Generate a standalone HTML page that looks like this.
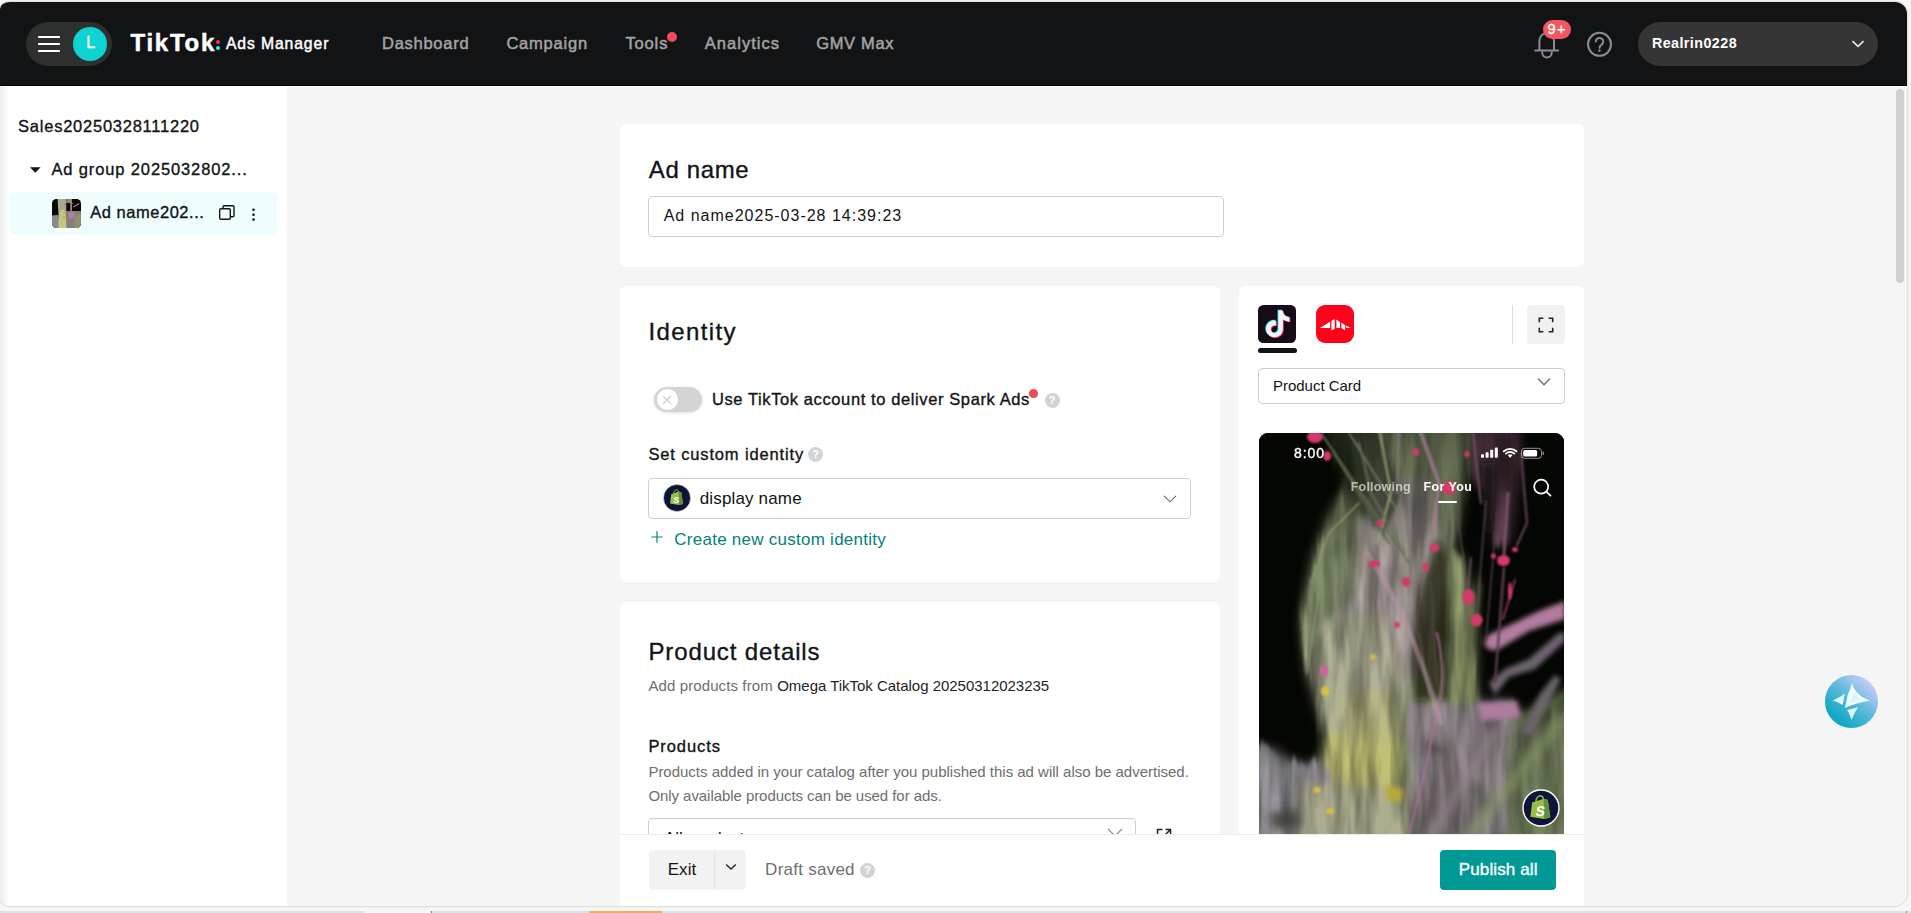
<!DOCTYPE html>
<html lang="en">
<head>
<meta charset="utf-8">
<title>TikTok Ads Manager</title>
<style>
html,body{margin:0;padding:0;}
body{width:1911px;height:913px;overflow:hidden;background:#f6f6f6;font-family:"Liberation Sans",sans-serif;color:#121415;position:relative;}
.abs{position:absolute;}
.t{position:absolute;white-space:nowrap;line-height:1;}
.m{-webkit-text-stroke:0.35px currentColor;}
#win{position:absolute;left:0;top:2px;width:1907px;height:903.500px;border-radius:10px 12px 14px 10px / 7px 12px 14px 8px;overflow:hidden;background:#f5f5f5;box-shadow:0 0 0 1.200px #e0e0e0;}
#hdr{position:absolute;left:0;top:0;width:1907px;height:84px;box-sizing:border-box;border-bottom:1px solid #000;background:#121315;z-index:3;}
#side{position:absolute;left:0;top:83px;width:287px;height:821px;background:#fff;}
.card{position:absolute;background:#fff;border-radius:6px;}
.inp{position:absolute;box-sizing:border-box;border:1px solid #cfcfcf;border-radius:4px;background:#fff;}
.help{position:absolute;width:15px;height:15px;border-radius:50%;background:#d2d3d4;color:#fff;font-size:11px;font-weight:bold;text-align:center;line-height:15px;}
</style>
</head>
<body>
<div id="win">
  <!-- HEADER -->
  <div id="hdr">
    <div class="abs" style="left:26px;top:20px;width:86px;height:44px;border-radius:22px;background:#2e2f2f;"></div>
    <svg class="abs" style="left:38px;top:33px" width="22" height="18" viewBox="0 0 22 18"><path d="M1 2h20M1 9h20M1 16h20" stroke="#fff" stroke-width="2.2" stroke-linecap="round"/></svg>
    <div class="abs" style="left:73.400px;top:25px;width:33.600px;height:33.600px;border-radius:50%;background:#0fd3d0;"></div>
    <span class="t m" id="tL" style="font-size:16px;color:#fff;letter-spacing:0.000px;left:86.2px;top:33.2px;">L</span>
    <span class="t" id="tTikTok" style="font-size:24px;-webkit-text-stroke:0.5px #fff;font-weight:bold;color:#fff;letter-spacing:1.772px;left:130.4px;top:28.7px;">TikTok</span>
    <div class="abs" style="left:216px;top:37.5px;width:4.4px;height:4.4px;border-radius:50%;background:#fe2c55;"></div>
    <div class="abs" style="left:216px;top:43.5px;width:4.4px;height:4.4px;border-radius:50%;background:#25f4ee;"></div>
    <span class="t m" id="tAds" style="font-size:15.7px;-webkit-text-stroke:0.45px #fff;color:#fff;letter-spacing:0.919px;left:225.9px;top:33.6px;">Ads Manager</span>
    <span class="t m" id="tDash" style="font-size:16.5px;-webkit-text-stroke:0.5px #a2a3a4;color:#a2a3a4;letter-spacing:0.733px;left:382.0px;top:32.8px;">Dashboard</span>
    <span class="t m" id="tCamp" style="font-size:16.5px;-webkit-text-stroke:0.5px #a2a3a4;color:#a2a3a4;letter-spacing:0.797px;left:506.4px;top:32.8px;">Campaign</span>
    <span class="t m" id="tTools" style="font-size:16.5px;-webkit-text-stroke:0.5px #a2a3a4;color:#a2a3a4;letter-spacing:0.867px;left:625.4px;top:32.8px;">Tools</span>
    <div class="abs" style="left:666.800px;top:29.800px;width:10px;height:10px;border-radius:50%;background:#f04c55;"></div>
    <span class="t m" id="tAnal" style="font-size:16.5px;-webkit-text-stroke:0.5px #a2a3a4;color:#a2a3a4;letter-spacing:1.034px;left:704.8px;top:32.8px;">Analytics</span>
    <span class="t m" id="tGmv" style="font-size:16.5px;-webkit-text-stroke:0.5px #a2a3a4;color:#a2a3a4;letter-spacing:0.676px;left:816.2px;top:32.8px;">GMV Max</span>
    <!-- bell -->
    <svg class="abs" style="left:1532px;top:28px" width="30" height="30" viewBox="0 0 30 30" fill="none" stroke="#8b8c8d" stroke-width="2"><path d="M2.5 20.6h24.5"/><path d="M7.4 20.6V10.5a7.3 7.3 0 0 1 14.6 0v10.1"/><path d="M10.300 21.400v1.300a4.700 4.700 0 0 0 9.400 0v-1.300"/></svg>
    <div class="abs" style="left:1543px;top:18px;width:28px;height:19px;border-radius:10px;background:#f4575f;"></div>
    <span class="t m" id="t9" style="font-size:14.500px;color:#fff;letter-spacing:1.453px;left:1547.6px;top:19.9px;">9+</span>
    <!-- help -->
    <svg class="abs" style="left:1586px;top:29px" width="27" height="27" viewBox="0 0 27 27" fill="none" stroke="#8b8c8d" stroke-width="2"><circle cx="13.5" cy="13.3" r="11.5"/><path d="M9.8 10.6a3.7 3.7 0 1 1 5.6 3.2c-1.2.8-1.9 1.4-1.9 2.9" stroke-linecap="round"/><circle cx="13.5" cy="19.6" r="0.9" fill="#8b8c8d" stroke-width="1"/></svg>
    <!-- account -->
    <div class="abs" style="left:1638px;top:20px;width:240px;height:44px;border-radius:22px;background:#353535;"></div>
    <span class="t" id="tAcct" style="font-size:14.300px;font-weight:bold;color:#fff;letter-spacing:0.442px;left:1651.9px;top:33.6px;">Realrin0228</span>
    <svg class="abs" style="left:1850px;top:37px" width="16" height="10" viewBox="0 0 16 10" fill="none" stroke="#e6e6e6" stroke-width="1.6"><path d="M2.5 2.2l5.5 5.2 5.5-5.2"/></svg>
  </div>

  <div class="abs" style="left:0;top:84px;width:1907px;height:1px;background:#fff;"></div>
  <!-- SIDEBAR -->
  <div id="side">
    <div class="abs" style="left:0;top:0;width:9px;height:821px;background:linear-gradient(90deg,#ececec,#fff);"></div>
    <span class="t m" id="tSales" style="font-size:16.5px;letter-spacing:0.756px;left:18.1px;top:32.7px;">Sales20250328111220</span>
    <svg class="abs" style="left:29px;top:81px" width="13" height="8" viewBox="0 0 13 8"><path d="M1 1.2h10.6L6.3 6.8z" fill="#121415"/></svg>
    <span class="t m" id="tGrp" style="font-size:16.5px;letter-spacing:0.872px;left:51.4px;top:75.6px;">Ad group 2025032802...</span>
    <div class="abs" style="left:9px;top:107px;width:269px;height:43px;border-radius:5px;background:#f0fdff;"></div>
    <span class="t m" id="tAdn" style="font-size:16.5px;letter-spacing:0.531px;left:90.2px;top:118.8px;">Ad name202...</span>
    <svg class="abs" style="left:218px;top:119px" width="18" height="17" viewBox="0 0 18 17" fill="none" stroke="#121415" stroke-width="1.4"><rect x="1.700" y="4.700" width="10.600" height="10.600" rx="1.200" fill="#f6feff"/><path d="M5 4.400V2.900a1.200 1.200 0 0 1 1.200-1.200h8.600a1.200 1.200 0 0 1 1.200 1.200v8.600a1.200 1.200 0 0 1-1.200 1.200h-2.200"/></svg>
    <svg class="abs" style="left:251px;top:122px" width="5" height="16" viewBox="0 0 5 16" fill="#121415"><circle cx="2.5" cy="2.8" r="1.3"/><circle cx="2.5" cy="7.7" r="1.3"/><circle cx="2.5" cy="12.6" r="1.3"/></svg>
    <!-- thumbnail placeholder -->
    <div id="thumb" class="abs" style="left:52px;top:114px;width:29px;height:29px;border-radius:4.500px;background:#070905;overflow:hidden;"><svg width="29" height="29" viewBox="0 0 29 29"><defs><filter id="tb"><feGaussianBlur stdDeviation=".7"/></filter></defs><g filter="url(#tb)"><path d="M5.500 -1H14.500V30H5L6.500 16z" fill="#a9a890"/><path d="M14.500 -1H19V4H14.500z" fill="#8a8a78"/><path d="M18.200 0H20V12H18.200z" fill="#8e9460"/><path d="M14 12H30V30H14z" fill="#857c7c"/><path d="M-1 16.500L6.500 16V30H-1z" fill="#8c888c"/><path d="M8.500 11L12 10.500L14 18L14.500 30H6.500L7 19z" fill="#c6c684"/><path d="M21 7.500L27 4L27.500 5L21.500 8.500z" fill="#b87ca4"/><path d="M16 14L22 12.500L23 18L17 20z" fill="#a884a0"/><path d="M22 17L29 15V30H23z" fill="#8c9070"/><path d="M14.500 4H18V12H14.500z" fill="#0a0c08"/><circle cx="12" cy="18.500" r="1.300" fill="#e0a040"/><circle cx="15.500" cy="1" r=".8" fill="#d23a6a"/><circle cx="20.500" cy="4.500" r=".7" fill="#d23a6a"/><circle cx="13.200" cy="5.500" r=".7" fill="#d23a6a"/></g></svg></div>
  </div>

  <!-- MAIN placeholder -->
  <div id="main">
    <!-- Ad name card (coords relative to #win: y = page y - 2) -->
    <div class="card" style="left:620px;top:122px;width:964px;height:143px;"></div>
    <span class="t m" id="tAdName" style="font-size:24px;letter-spacing:0.623px;left:648.8px;top:156.0px;">Ad name</span>
    <div class="inp" style="left:648px;top:194px;width:576px;height:41px;"></div>
    <span class="t" id="tAdVal" style="font-size:16px;letter-spacing:0.996px;left:663.7px;top:206.4px;">Ad name2025-03-28 14:39:23</span>

    <!-- Identity card -->
    <div class="card" style="left:620px;top:284px;width:600px;height:296px;"></div>
    <span class="t m" id="tIdent" style="font-size:24px;letter-spacing:1.358px;left:648.6px;top:318.0px;">Identity</span>
    <div class="abs" style="left:654px;top:384.800px;width:48px;height:25.700px;border-radius:13px;background:#d3d4d5;box-shadow:0 1px 3px rgba(0,0,0,.12);"></div>
    <div class="abs" style="left:656.500px;top:387.200px;width:21px;height:21px;border-radius:50%;background:#fff;"></div>
    <svg class="abs" style="left:661px;top:392px" width="12" height="12" viewBox="0 0 12 12" stroke="#cfd0d1" stroke-width="1.3" fill="none"><path d="M2 2l8 8M10 2l-8 8"/></svg>
    <span class="t m" id="tSpark" style="font-size:16.5px;letter-spacing:0.606px;left:711.9px;top:388.8px;">Use TikTok account to deliver Spark Ads</span>
    <div class="abs" style="left:1029px;top:387px;width:8.5px;height:8.5px;border-radius:50%;background:#f04c55;"></div>
    <div class="help" style="left:1044.5px;top:391px;">?</div>
    <span class="t m" id="tSetCI" style="font-size:16.5px;letter-spacing:0.855px;left:648.4px;top:443.8px;">Set custom identity</span>
    <div class="help" style="left:808px;top:444.5px;">?</div>
    <div class="inp" style="left:648px;top:476px;width:543px;height:41px;"></div>
    <svg class="abs" style="left:663px;top:482px" width="28" height="28" viewBox="0 0 28 28"><circle cx="14" cy="14" r="13.5" fill="#0f1335" stroke="#e6e6e6" stroke-width=".6"/><path d="M8.2 10.2l7.6-2.6 2.6.9 1.6 11.4-4.2 1.1-8.7-1.5z" fill="#95bf47"/><path d="M15.8 7.6l2.6.9 1.6 11.4-4.2 1.1z" fill="#5e8e3e"/><path d="M10.6 9.6c.2-2.4 1.6-4 3-3.9 1 .1 1.7 1 2 2.3" fill="none" stroke="#95bf47" stroke-width="1"/><text x="10.3" y="18.6" font-family="Liberation Sans,sans-serif" font-size="9" font-weight="bold" font-style="italic" fill="#fff">S</text></svg>
    <span class="t" id="tDisp" style="font-size:17px;letter-spacing:0.157px;left:699.7px;top:487.6px;">display name</span>
    <svg class="abs" style="left:1162px;top:492px" width="16" height="10" viewBox="0 0 16 10" fill="none" stroke="#686a6c" stroke-width="1.150"><path d="M2 1.8l6 6 6-6"/></svg>
    <svg class="abs" style="left:649.800px;top:528.300px" width="14" height="14" viewBox="0 0 14 14" stroke="#0a8480" stroke-width="1.200" fill="none"><path d="M7 1.300v11.400M1.300 7h11.400"/></svg>
    <span class="t" id="tCreate" style="font-size:17px;color:#077f7b;letter-spacing:0.258px;left:674.3px;top:529.3px;">Create new custom identity</span>

    <!-- Product details card -->
    <div class="card" style="left:620px;top:600px;width:600px;height:320px;"></div>
    <span class="t m" id="tProd" style="font-size:24px;letter-spacing:0.888px;left:648.4px;top:637.5px;">Product details</span>
    <span class="t" id="tAddFrom" style="font-size:15px;color:#6d6e70;letter-spacing:0.109px;left:648.4px;top:676.4px;">Add products from</span>
    <span class="t" id="tOmega" style="font-size:15px;color:#232425;letter-spacing:-0.021px;left:777.2px;top:676.4px;">Omega TikTok Catalog 20250312023235</span>
    <span class="t m" id="tProducts" style="font-size:16.5px;letter-spacing:0.911px;left:648.4px;top:736.3px;">Products</span>
    <span class="t" id="tPAdded" style="font-size:15px;color:#6d6e70;letter-spacing:-0.009px;left:648.4px;top:762.1px;">Products added in your catalog after you published this ad will also be advertised.</span>
    <span class="t" id="tOnly" style="font-size:15px;color:#6d6e70;letter-spacing:-0.059px;left:648.4px;top:785.9px;">Only available products can be used for ads.</span>
    <div class="inp" style="left:648px;top:816px;width:488px;height:41px;"></div>
    <span class="t" id="tAllp" style="left:664px;top:828px;font-size:17px;">All products</span>
    <svg class="abs" style="left:1106px;top:826px" width="18" height="12" viewBox="0 0 18 12" fill="none" stroke="#8a8c8e" stroke-width="1.200"><path d="M2 1l7 7 7-7"/></svg>
    <svg class="abs" style="left:1155px;top:825px" width="18" height="18" viewBox="0 0 18 18" fill="none" stroke="#232425" stroke-width="1.5"><path d="M7.5 2.5h-5v13h13v-5M10.5 2.5h5v5M15.5 2.5l-7 7"/></svg>

    <!-- Preview card -->
    <div class="card" style="left:1239px;top:284px;width:345px;height:640px;"></div>
    <div id="tticon" class="abs" style="left:1258px;top:303px;width:38.200px;height:38.200px;border-radius:5.500px;background:#170b1a;overflow:hidden;"><svg width="38.500" height="38.500" viewBox="0 0 38.500 38.500"><defs><path id="ttn" d="M12.525.02c1.31-.02 2.61-.01 3.91-.02.08 1.53.63 3.09 1.75 4.17 1.12 1.11 2.7 1.62 4.24 1.79v4.03c-1.44-.05-2.89-.35-4.2-.97-.57-.26-1.1-.59-1.62-.93-.01 2.92.01 5.84-.02 8.75-.08 1.4-.54 2.79-1.35 3.94-1.31 1.92-3.58 3.17-5.91 3.21-1.43.08-2.86-.31-4.08-1.03-2.02-1.19-3.44-3.37-3.65-5.71-.02-.5-.03-1-.01-1.49.18-1.9 1.12-3.72 2.58-4.96 1.66-1.44 3.98-2.13 6.15-1.72.02 1.48-.04 2.96-.04 4.44-.99-.32-2.15-.23-3.02.37-.63.41-1.11 1.04-1.36 1.75-.21.51-.15 1.07-.14 1.61.24 1.64 1.82 3.02 3.5 2.87 1.12-.01 2.19-.66 2.77-1.61.19-.33.4-.67.41-1.06.1-1.79.06-3.57.07-5.36.01-4.03-.01-8.05.02-12.07z"/></defs><g transform="translate(6.400 5.500) scale(1.120)"><use href="#ttn" fill="#25f4ee" transform="translate(-.75 -.6)"/><use href="#ttn" fill="#fe2c55" transform="translate(.75 .6)"/><use href="#ttn" fill="#f4f4f4"/></g></svg></div>
    <div class="abs" style="left:1258px;top:346px;width:39px;height:5px;border-radius:2.5px;background:#121415;"></div>
    <div id="pgicon" class="abs" style="left:1316px;top:303px;width:38px;height:38.200px;border-radius:9px;background:#fe0219;overflow:hidden;"><svg width="38.500" height="38.500" viewBox="0 0 38.500 38.500" fill="#fff"><path d="M3.900 23.100L14.100 16.800V23.100z"/><path d="M15.400 16L18.700 13.900V24L15.400 25.200z"/><path d="M20.400 14.400L24 16.900V23.100H20.400z"/><path d="M25.300 17.800L29.200 20.200V25.200L25.300 23.100z"/><path d="M30.200 20.600L34.800 23.100H30.200z"/></svg></div>
    <div class="abs" style="left:1511.5px;top:303px;width:1.5px;height:39px;background:#dcdcdc;"></div>
    <div class="abs" style="left:1527px;top:303px;width:38px;height:39px;border-radius:4px;background:#f1f1f1;"></div>
    <svg class="abs" style="left:1538px;top:315px" width="16" height="16" viewBox="0 0 16 16" fill="none" stroke="#232425" stroke-width="1.6"><path d="M1.3 5.3v-4h4M10.7 1.3h4v4M14.7 10.7v4h-4M5.3 14.7h-4v-4"/></svg>
    <div class="inp" style="left:1258px;top:366px;width:307px;height:36px;"></div>
    <span class="t" id="tPCard" style="font-size:15px;letter-spacing:-0.025px;left:1273.0px;top:376.4px;">Product Card</span>
    <svg class="abs" style="left:1536px;top:375px" width="16" height="10" viewBox="0 0 16 10" fill="none" stroke="#6a6c6e" stroke-width="1.3"><path d="M2 1.8l6 6 6-6"/></svg>
    <div id="phone" class="abs" style="left:1258.800px;top:431px;width:305.500px;height:420px;border-radius:9px 9px 0 0;background:#050604;overflow:hidden;">
<svg class="abs" style="left:0;top:0" width="306" height="420" viewBox="0 0 306 420">
  <defs>
    <filter id="b7" x="-30%" y="-30%" width="160%" height="160%"><feGaussianBlur stdDeviation="6"/></filter>
    <filter id="b4" x="-30%" y="-30%" width="160%" height="160%"><feGaussianBlur stdDeviation="4"/></filter>
    <filter id="b3" x="-30%" y="-30%" width="160%" height="160%"><feGaussianBlur stdDeviation="2.800"/></filter>
    <filter id="b2" x="-30%" y="-30%" width="160%" height="160%"><feGaussianBlur stdDeviation="2"/></filter>
    <filter id="b1" x="-30%" y="-30%" width="160%" height="160%"><feGaussianBlur stdDeviation="0.8"/></filter>
    <filter id="wisp" x="-30" y="-30" width="366" height="480" filterUnits="userSpaceOnUse" primitiveUnits="userSpaceOnUse">
      <feTurbulence type="fractalNoise" baseFrequency="0.06 0.009" numOctaves="3" seed="7" result="n"/>
      <feColorMatrix in="n" type="matrix" values="0 0 0 0 0  0 0 0 0 0  0 0 0 0 0  2.6 0 0 0 -0.75" result="na"/>
      <feGaussianBlur in="SourceGraphic" stdDeviation="3" result="bl"/>
      <feDisplacementMap in="bl" in2="n" scale="26" xChannelSelector="G" yChannelSelector="B" result="dp"/>
      <feComposite in="dp" in2="na" operator="in"/>
    </filter>
    <linearGradient id="topdark" x1="0" y1="0" x2="0" y2="1"><stop offset="0" stop-color="#060805" stop-opacity=".42"/><stop offset=".6" stop-color="#060805" stop-opacity=".25"/><stop offset="1" stop-color="#060805" stop-opacity="0"/></linearGradient>
    <g id="smoke">
      <!-- main column -->
      <path d="M75 -30 L215 -30 L205 60 L195 110 L186 170 L182 240 L178 300 L200 430 L40 430 L62 340 L66 300 L48 240 L42 190 L52 130 L70 80 L95 40 Z" fill="#a2b084"/>
      <path d="M110 60 L170 40 L185 120 L180 200 L150 260 L100 250 L70 200 L90 120 Z" fill="#c6b0be" opacity=".7"/>
      <path d="M60 190 L120 180 L150 250 L140 300 L70 300 L48 240 Z" fill="#bcbc9e" opacity=".9"/>
      <path d="M55 120 L100 100 L95 170 L60 190 L46 170 Z" fill="#86946e" opacity=".8"/>
      <path d="M55 -30 L110 -30 L150 70 L120 100 L95 75 Z" fill="#3c4630" opacity=".7"/>
      <!-- right top pink wisps -->
      <path d="M205 -30 L262 -30 L258 60 L250 110 L236 112 L228 60 L214 40 Z" fill="#7a5068"/>
      <!-- green second column -->
      <path d="M190 115 L204 125 L216 170 L219 300 L196 310 L186 260 L190 200 Z" fill="#9aa872"/>
      <!-- bottom smoke -->
      <path d="M150 272 L250 266 L270 290 L340 270 L340 450 L150 450 Z" fill="#9a9096"/>
      <path d="M-30 318 L12 314 L30 326 L48 332 L72 318 L80 345 L70 450 L-30 450 Z" fill="#a09ca4"/>
      <path d="M250 300 L340 250 L340 450 L240 450 Z" fill="#788a5c" opacity=".8"/>
      <path d="M72 300 L120 290 L142 310 L146 362 L120 372 L80 360 L64 332 Z" fill="#cccc7c"/>
      <path d="M84 262 L132 255 L146 300 L120 310 L80 306 Z" fill="#c4c48a" opacity=".8"/>
      <path d="M40 352 L150 352 L160 430 L40 430 Z" fill="#b8b898" opacity=".9"/>
    </g>
  </defs>
  <rect width="306" height="420" fill="#040603"/>
  <use href="#smoke" filter="url(#b7)" opacity=".58"/>
  <use href="#smoke" filter="url(#wisp)" opacity=".88"/>
  <rect x="0" y="0" width="306" height="130" fill="url(#topdark)"/>
  <!-- dark gap between columns -->
  <g filter="url(#b4)">
    <path d="M178 104 L190 122 L189 200 L186 266 L156 268 L155 215 L162 150 Z" fill="#0c1008" opacity=".72"/>
    <path d="M222 30 L236 30 L234 100 L226 100 Z" fill="#120c10" opacity=".8"/>
    <path d="M244 0 L250 0 L248 60 L244 60 Z" fill="#120c10" opacity=".7"/>
    <path d="M10 380 L38 376 L42 394 L14 396 Z" fill="#3c3c36" opacity=".8"/>
  </g>
  <!-- diagonal bottom-right texture -->
  <g filter="url(#b4)" fill="none" stroke-linecap="round">
    <path d="M205 410 L300 290" stroke="#8c9c66" stroke-width="13" opacity=".55"/>
    <path d="M170 405 L235 300" stroke="#9a8892" stroke-width="12" opacity=".6"/>
    <path d="M255 410 L312 330" stroke="#5e7048" stroke-width="10" opacity=".55"/>
    <path d="M258 290 L306 262" stroke="#6a7c50" stroke-width="12" opacity=".7"/>
    <path d="M168 312 L182 318" stroke="#3a3434" stroke-width="9" opacity=".6"/>
    <path d="M218 352 L226 372" stroke="#3e4432" stroke-width="8" opacity=".6"/>
  </g>
  <!-- pink streaks right -->
  <g filter="url(#b3)">
    <path d="M226 212 Q224 203 236 199 L280 178 L306 168 L306 186 L270 198 L240 216 Q230 220 226 212Z" fill="#b27c9e"/>
    <path d="M230 250 L246 236 L270 226 L300 200 L306 200 L306 208 L276 236 L250 244 L236 262 Z" fill="#6e6470"/>
    <path d="M262 300 L280 262 L296 242 L302 246 L290 270 L274 302 Z" fill="#6c6468"/>
    <path d="M218 270 L258 268 L262 284 L222 288 Z" fill="#ad7c9e"/>
    <path d="M126 352 L144 356 L142 370 L128 368 Z" fill="#b8a83a"/>
  </g>
  <!-- strands -->
  <g fill="none" stroke-linecap="round" filter="url(#b1)">
    <path d="M62 0 L150 130" stroke="#5d7048" stroke-width="2"/>
    <path d="M90 0 L140 80 L150 160" stroke="#76806a" stroke-width="1.5"/>
    <path d="M120 -5 L132 60 L118 110" stroke="#a2aa7a" stroke-width="3" opacity=".7"/>
    <path d="M160 -5 L180 50 L174 100" stroke="#a07a92" stroke-width="4" opacity=".8"/>
    <path d="M178 200 Q187 240 180 270 T168 330 L150 401" stroke="#b070a0" stroke-width="1.6"/>
    <path d="M212 125 L205 200" stroke="#7a5a70" stroke-width="1.5"/>
    <path d="M245 135 L236 250" stroke="#5a4050" stroke-width="2.5"/>
    <path d="M52 150 L70 100 L100 70" stroke="#8a966e" stroke-width="1.5"/>
    <path d="M48 240 L60 160" stroke="#99a27c" stroke-width="1.2"/>
    <path d="M227 68 L218 181" stroke="#5a4452" stroke-width="1.500"/>
    <path d="M160 200 L170 262" stroke="#5c5c4c" stroke-width="1.300"/>
    <path d="M172 150 L178 255" stroke="#4c4c40" stroke-width="1.300"/>
    <path d="M238 79 L227 207" stroke="#4e3c48" stroke-width="1.500"/>
    <path d="M197 73 L209 159" stroke="#5a4a52" stroke-width="1.300"/>
    <path d="M249 60 L245 122" stroke="#8a5a76" stroke-width="3" opacity=".8"/>
    <path d="M256 147 L244 186" stroke="#c04070" stroke-width="1.800" opacity=".8"/>
    <path d="M262 20 L268 90 L258 112" stroke="#6a4a5e" stroke-width="2.500" opacity=".8"/>
    <path d="M214 0 L222 70" stroke="#7a5a6c" stroke-width="2.500" opacity=".7"/>
    <path d="M75 20 L130 110" stroke="#55664a" stroke-width="3" opacity=".7"/>
    <path d="M100 10 L112 60 L146 120" stroke="#6a7458" stroke-width="2.500" opacity=".7"/>
    <path d="M140 0 L138 60" stroke="#8a7a84" stroke-width="3" opacity=".6"/>
    <path d="M108 120 Q150 180 182 290" stroke="#b896aa" stroke-width="5" opacity=".55"/>
  </g>
  <!-- droplets -->
  <g fill="#d23a6a" filter="url(#b1)">
    <ellipse cx="56" cy="4" rx="8" ry="6"/>
    <ellipse cx="68" cy="23" rx="4" ry="5"/>
    <ellipse cx="121" cy="90" rx="3" ry="3.5"/>
    <ellipse cx="115" cy="131" rx="6" ry="3.5"/>
    <ellipse cx="147" cy="149" rx="4" ry="5"/>
    <ellipse cx="138" cy="192" rx="3" ry="3"/>
    <ellipse cx="175.500" cy="115" rx="5" ry="4"/>
    <ellipse cx="166.500" cy="134" rx="3" ry="4.500"/>
    <ellipse cx="209.500" cy="164" rx="6" ry="8"/>
    <ellipse cx="217.500" cy="187" rx="6" ry="6.500"/>
    <ellipse cx="244.500" cy="127.500" rx="6.500" ry="5.500"/>
    <ellipse cx="234.500" cy="123" rx="2.500" ry="2.500"/>
    <ellipse cx="256" cy="116.500" rx="3" ry="2.500"/>
    <ellipse cx="251" cy="158" rx="2" ry="9"/>
    <ellipse cx="190" cy="55" rx="7" ry="7"/>
    <ellipse cx="157" cy="19" rx="3" ry="4"/>
    <ellipse cx="65" cy="238" rx="4" ry="6" fill="#d060a0"/>
    <ellipse cx="208" cy="21" rx="2.500" ry="3"/>
  </g>
  <g fill="#d8c040" filter="url(#b1)">
    <ellipse cx="66" cy="258" rx="4" ry="5"/>
    <ellipse cx="114" cy="224" rx="3" ry="2.500"/>
    <ellipse cx="58" cy="357" rx="3.500" ry="3"/>
    <ellipse cx="71" cy="378" rx="4" ry="3"/>
  </g>
</svg>
    <!--endphone--></div>

    <!-- phone overlay -->
    <span class="t m" id="tTime" style="font-size:14px;color:#fff;letter-spacing:0.883px;left:1294.1px;top:443.6px;">8:00</span>
    <span class="t" id="tFoll" style="font-size:12.5px;font-weight:bold;color:rgba(255,255,255,.62);letter-spacing:0.184px;left:1350.8px;top:478.9px;">Following</span>
    <span class="t" id="tForYou" style="font-size:12.5px;font-weight:bold;color:#fff;letter-spacing:0.404px;left:1423.4px;top:478.6px;">For You</span>
    <div class="abs" style="left:1438px;top:498.800px;width:19px;height:1.800px;background:#fff;border-radius:1px;"></div>
    <svg class="abs" style="left:1478px;top:443px" width="70" height="16" viewBox="0 0 70 16">
      <g fill="#fff"><rect x="3" y="9.200" width="3" height="3.600" rx=".8"/><rect x="7.600" y="7.200" width="3" height="5.600" rx=".8"/><rect x="12.200" y="4.800" width="3" height="8" rx=".8"/><rect x="16.800" y="2.600" width="3" height="10.200" rx=".8"/></g>
      <path d="M25.800 6.300a9.400 9.400 0 0 1 12.600 0M27.900 8.600a6.200 6.200 0 0 1 8.400 0" fill="none" stroke="#fff" stroke-width="1.900" stroke-linecap="round"/><path d="M32.100 12.800l-2.300-2.500a3.300 3.300 0 0 1 4.600 0z" fill="#fff"/>
      <rect x="43.500" y="3.300" width="20" height="10" rx="3" fill="none" stroke="#fff" stroke-opacity=".55" stroke-width="1"/><rect x="45.200" y="5" width="14" height="6.600" rx="1.700" fill="#fff"/><rect x="64.600" y="6.600" width="1.300" height="3.400" rx=".6" fill="#fff" fill-opacity=".55"/>
    </svg>
    <svg class="abs" style="left:1530px;top:474px" width="24" height="24" viewBox="0 0 24 24" fill="none" stroke="#fff" stroke-width="1.700" stroke-linecap="round"><circle cx="11.200" cy="10.700" r="7"/><path d="M16.300 15.700l4.200 4"/></svg>
    <svg class="abs" style="left:1522.400px;top:786.800px" width="38" height="38" viewBox="0 0 38 38"><circle cx="19" cy="19" r="18" fill="#0f1538" stroke="#fff" stroke-width="1.400"/><g transform="translate(19 19) scale(1.080) translate(-19 -18.600)"><path d="M10.800 13.600l10.800-3.600 3.700 1.300 2.300 16-6 1.600-12.400-2.100z" fill="#95bf47"/><path d="M21.600 10l3.700 1.300 2.300 16-6 1.600z" fill="#5e8e3e"/><path d="M14.200 12.700c.3-3.400 2.300-5.700 4.300-5.500 1.400.1 2.400 1.400 2.800 3.200" fill="none" stroke="#95bf47" stroke-width="1.300"/><text x="13.400" y="25.600" font-family="Liberation Sans,sans-serif" font-size="13" font-weight="bold" fill="#fff" transform="translate(4 0) skewX(-9)">S</text></g></svg>

    <div class="abs" style="left:1896px;top:87px;width:8px;height:194px;border-radius:4px;background:#cfd0d2;"></div>
    <!-- Floating assistant -->
    <div class="abs" style="left:1825px;top:673px;width:53px;height:53px;border-radius:50%;background:linear-gradient(40deg,#12a7c7 20%,#55b8d8 50%,#c9ccf9 86%);"></div>
    <svg class="abs" style="left:1825px;top:673px" width="53" height="53" viewBox="0 0 53 53"><path d="M7.900 25.600Q15 22.500 19.900 18.600L17.700 30Q12.500 27 7.900 25.600z" fill="#dff6fc"/><path d="M27.050 7.700Q29.500 20 45.100 25.600Q30 28.500 19.900 33L22.800 19.500Q25.800 14 27.050 7.700z" fill="#f0fdff"/><path d="M22.100 35L33.100 32.200Q29 38 26.500 45.100Q25 39.500 22.100 35z" fill="#dcf5fb"/><path d="M24 28.500L29.500 17.500L36 24.800z" fill="#d6f2fa" opacity=".75"/></svg>

    <!-- Footer bar -->
    <div class="abs" style="left:620px;top:832px;width:964px;height:80px;background:#fff;border-top:1px solid #ececec;"></div>
    <div class="abs" style="left:649px;top:848px;width:97px;height:40px;border-radius:4px;background:#f2f2f2;"></div>
    <div class="abs" style="left:714px;top:848px;width:1px;height:40px;background:#e6e6e6;"></div>
    <span class="t" id="tExit" style="font-size:17px;letter-spacing:0.085px;left:667.7px;top:859.2px;">Exit</span>
    <svg class="abs" style="left:724px;top:860px" width="14" height="10" viewBox="0 0 14 10" fill="none" stroke="#232425" stroke-width="1.4"><path d="M2.200 2.500l4.800 4.600 4.800-4.600"/></svg>
    <span class="t" id="tDraft" style="font-size:17px;color:#6d6e70;letter-spacing:0.256px;left:765.1px;top:859.2px;">Draft saved</span>
    <div class="help" style="left:860px;top:861px;">?</div>
    <div class="abs" style="left:1440px;top:848px;width:116px;height:40px;border-radius:4px;background:#009995;"></div>
    <span class="t m" id="tPub" style="font-size:17px;color:#fff;letter-spacing:0.120px;left:1458.8px;top:859.0px;">Publish all</span>
  </div>
</div>
<div class="abs" style="left:0;top:911px;width:1911px;height:2px;background:#d6e3e9;"></div>
<div class="abs" style="left:364px;top:911px;width:66px;height:2px;background:#f4f8f8;"></div>
<div class="abs" style="left:430.500px;top:911px;width:1.500px;height:2px;background:#8a8f92;"></div>
<div class="abs" style="left:589px;top:911px;width:73px;height:2px;background:#f2ab63;"></div>
<div class="abs" style="left:1905.500px;top:911px;width:1.500px;height:2px;background:#8a8f92;"></div>
</body>
</html>
